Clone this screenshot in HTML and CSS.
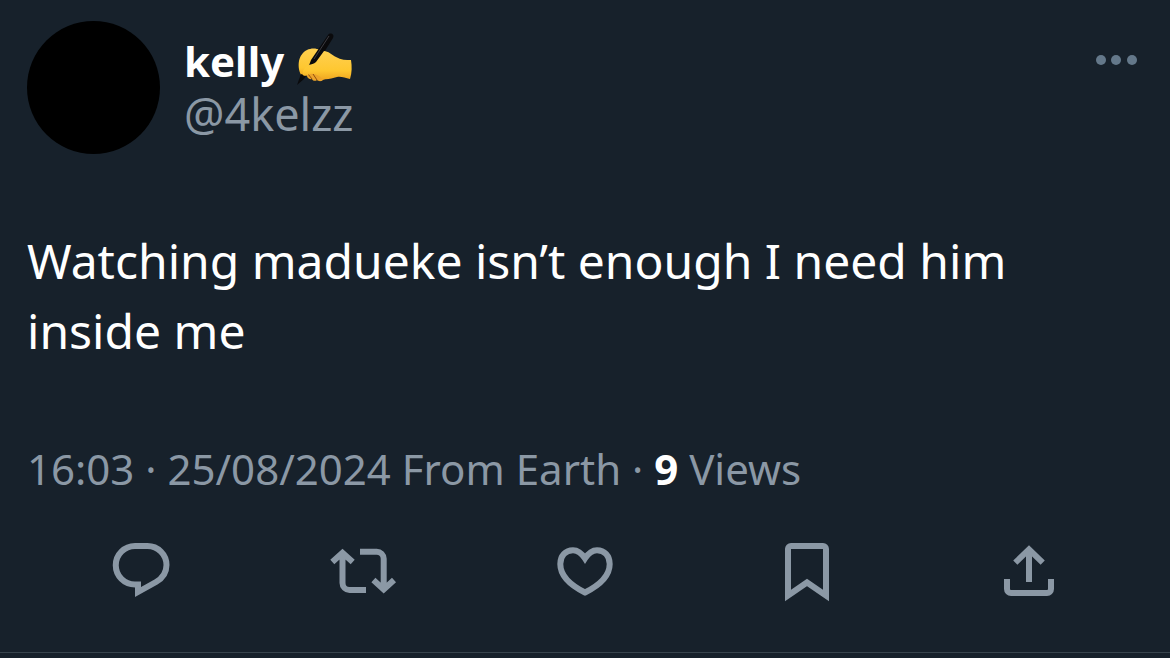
FILE: index.html
```html
<!DOCTYPE html>
<html lang="en">
<head>
  <meta charset="UTF-8" />
  <meta name="viewport" content="width=device-width, initial-scale=1.0"/>
  <title>Post</title>
  <link rel="stylesheet" href="styles.css">
</head>
<body>
  <article class="post">
    <header class="header">
      <div class="avatar"></div>
      <div class="names">
        <div class="name">
          <span>kelly</span>
          <svg class="emoji" viewBox="0 0 60 60" role="img" aria-label="writing hand">
            <defs>
              <linearGradient id="skin" x1="0" y1="0" x2="0" y2="1">
                <stop offset="0" stop-color="#ffd050"/>
                <stop offset="0.7" stop-color="#fec730"/>
                <stop offset="1" stop-color="#f0a822"/>
              </linearGradient>
            </defs>
            <!-- curled fingers -->
            <path fill="#eda42a" d="M12 43L20 39L38 46L29 50C27 52 24 51 23 50C21 52 18 50 18 49C15 50 13 48 12 43Z"/>
            <path fill="none" stroke="#8f4f10" stroke-width="1" d="M14 44L18 49M19 44L23 50"/>
            <!-- index finger -->
            <path fill="url(#skin)" d="M5 31C6 26 9 22 13 20C17 18 22 18 26 20L19 33L12 39L8 46C5 43 4 36 5 31Z"/>
            <!-- pen -->
            <path fill="#0a0a0c" d="M34 5C36 2 41 4 39 8L24 32L14 38L17 30Z"/>
            <path fill="#0a0a0c" d="M7 44L12 46L10 49L3 55Z"/>
            <path fill="none" stroke="#3c3c42" stroke-width="1" d="M35 6L20 29"/>
            <!-- thumb and back of the hand -->
            <path fill="url(#skin)" d="M9 45C8 40 11 37 15 35C17 34 20 34 22 32L30 21C34 21 38 25 42 27C47 30 52 30 57 30C58 36 58 43 56 49C51 48 47 46 43 47C38 48 34 50 29 49C25 46 21 43 16 44C13 45 11 47 9 45Z"/>
          </svg>
        </div>
        <a class="handle" href="#">@4kelzz</a>
      </div>
      <button class="more" aria-label="More">
        <svg viewBox="0 0 42 12">
          <circle cx="6" cy="6" r="5"/>
          <circle cx="21" cy="6" r="5"/>
          <circle cx="37" cy="6" r="5"/>
        </svg>
      </button>
    </header>

    <p class="text">Watching madueke isn’t enough I need him inside me</p>

    <div class="meta">16:03 · 25/08/2024 From Earth · <strong>9</strong> Views</div>

    <div class="actions">
      <button aria-label="Reply">
        <svg viewBox="0 0 72 72"><path d="M30 11H42.5A19 19 0 0 1 61.5 30C61.5 38 58 43 51 47L33 57V49.5H30A19.25 19.25 0 0 1 30 11Z"/></svg>
      </button>
      <button aria-label="Repost">
        <svg viewBox="0 0 72 72"><path d="M5.3 27L15.5 17.8L25.7 27M15.5 18V48A7 7 0 0 0 22.5 55H39M33 16.7H49.7A7 7 0 0 1 56.7 23.7V54M46.4 45L56.7 54.4L67 45"/></svg>
      </button>
      <button aria-label="Like">
        <svg viewBox="0 0 72 72"><path d="M36 23.5C32.5 18 28.5 15.2 24 15.2C16.5 15.2 11.3 21 11.3 29C11.3 40 21 50 36 57.5C51 50 60.7 40 60.7 29C60.7 21 55.5 15.2 48 15.2C43.5 15.2 39.5 18 36 23.5Z"/></svg>
      </button>
      <button aria-label="Bookmark">
        <svg viewBox="0 0 72 72"><path d="M17 60.5V14A3 3 0 0 1 20 11H52A3 3 0 0 1 55 14V60.5L36 47.5Z"/></svg>
      </button>
      <button aria-label="Share">
        <svg viewBox="0 0 72 72"><path d="M22.3 27.7L36 14.4L49.7 27.7M36 15V47M14 44V54A4 4 0 0 0 18 58H54A4 4 0 0 0 58 54V44"/></svg>
      </button>
    </div>
  </article>
</body>
</html>
```

FILE: styles.css
```css
body {
  margin: 0;
  font-family: "Noto Sans", "Open Sans", sans-serif;
  background-color: #17212b;
  color: #ffffff;
}
button {
  padding: 0;
  border: none;
  background: none;
  cursor: pointer;
}
svg {
  display: block;
}
.post {
  border-bottom: 1px solid #38444d;
}
.header {
  display: flex;
  align-items: flex-start;
  gap: 24px;
  padding: 21px 33px 0 27px;
}
.avatar {
  width: 133px;
  height: 133px;
  border-radius: 50%;
  background-color: #000000;
}
.names {
  flex: 1;
  padding-top: 12px;
}
.name {
  display: flex;
  align-items: center;
  gap: 10px;
  height: 54px;
  font-size: 42px;
  font-weight: 700;
}
.emoji {
  width: 60px;
  height: 60px;
}
.handle {
  display: block;
  font-size: 45px;
  line-height: 54px;
  color: #8b98a5;
  text-decoration: none;
}
.more {
  margin-top: 33px;
}
.more svg {
  width: 42px;
  height: 12px;
  fill: #64788a;
}
.text {
  margin: 72px 27px 0;
  font-size: 48px;
  line-height: 70px;
}
.meta {
  margin: 73px 27px 0;
  font-size: 42px;
  line-height: 60px;
  color: #8b98a5;
}
.meta strong {
  color: #ffffff;
}
.actions {
  display: grid;
  grid-template-columns: repeat(5, 1fr);
  justify-items: center;
  padding: 36px 30px 45px;
}
.actions svg {
  width: 72px;
  height: 72px;
  fill: none;
  stroke: #8b98a5;
  stroke-width: 6;
}
```
